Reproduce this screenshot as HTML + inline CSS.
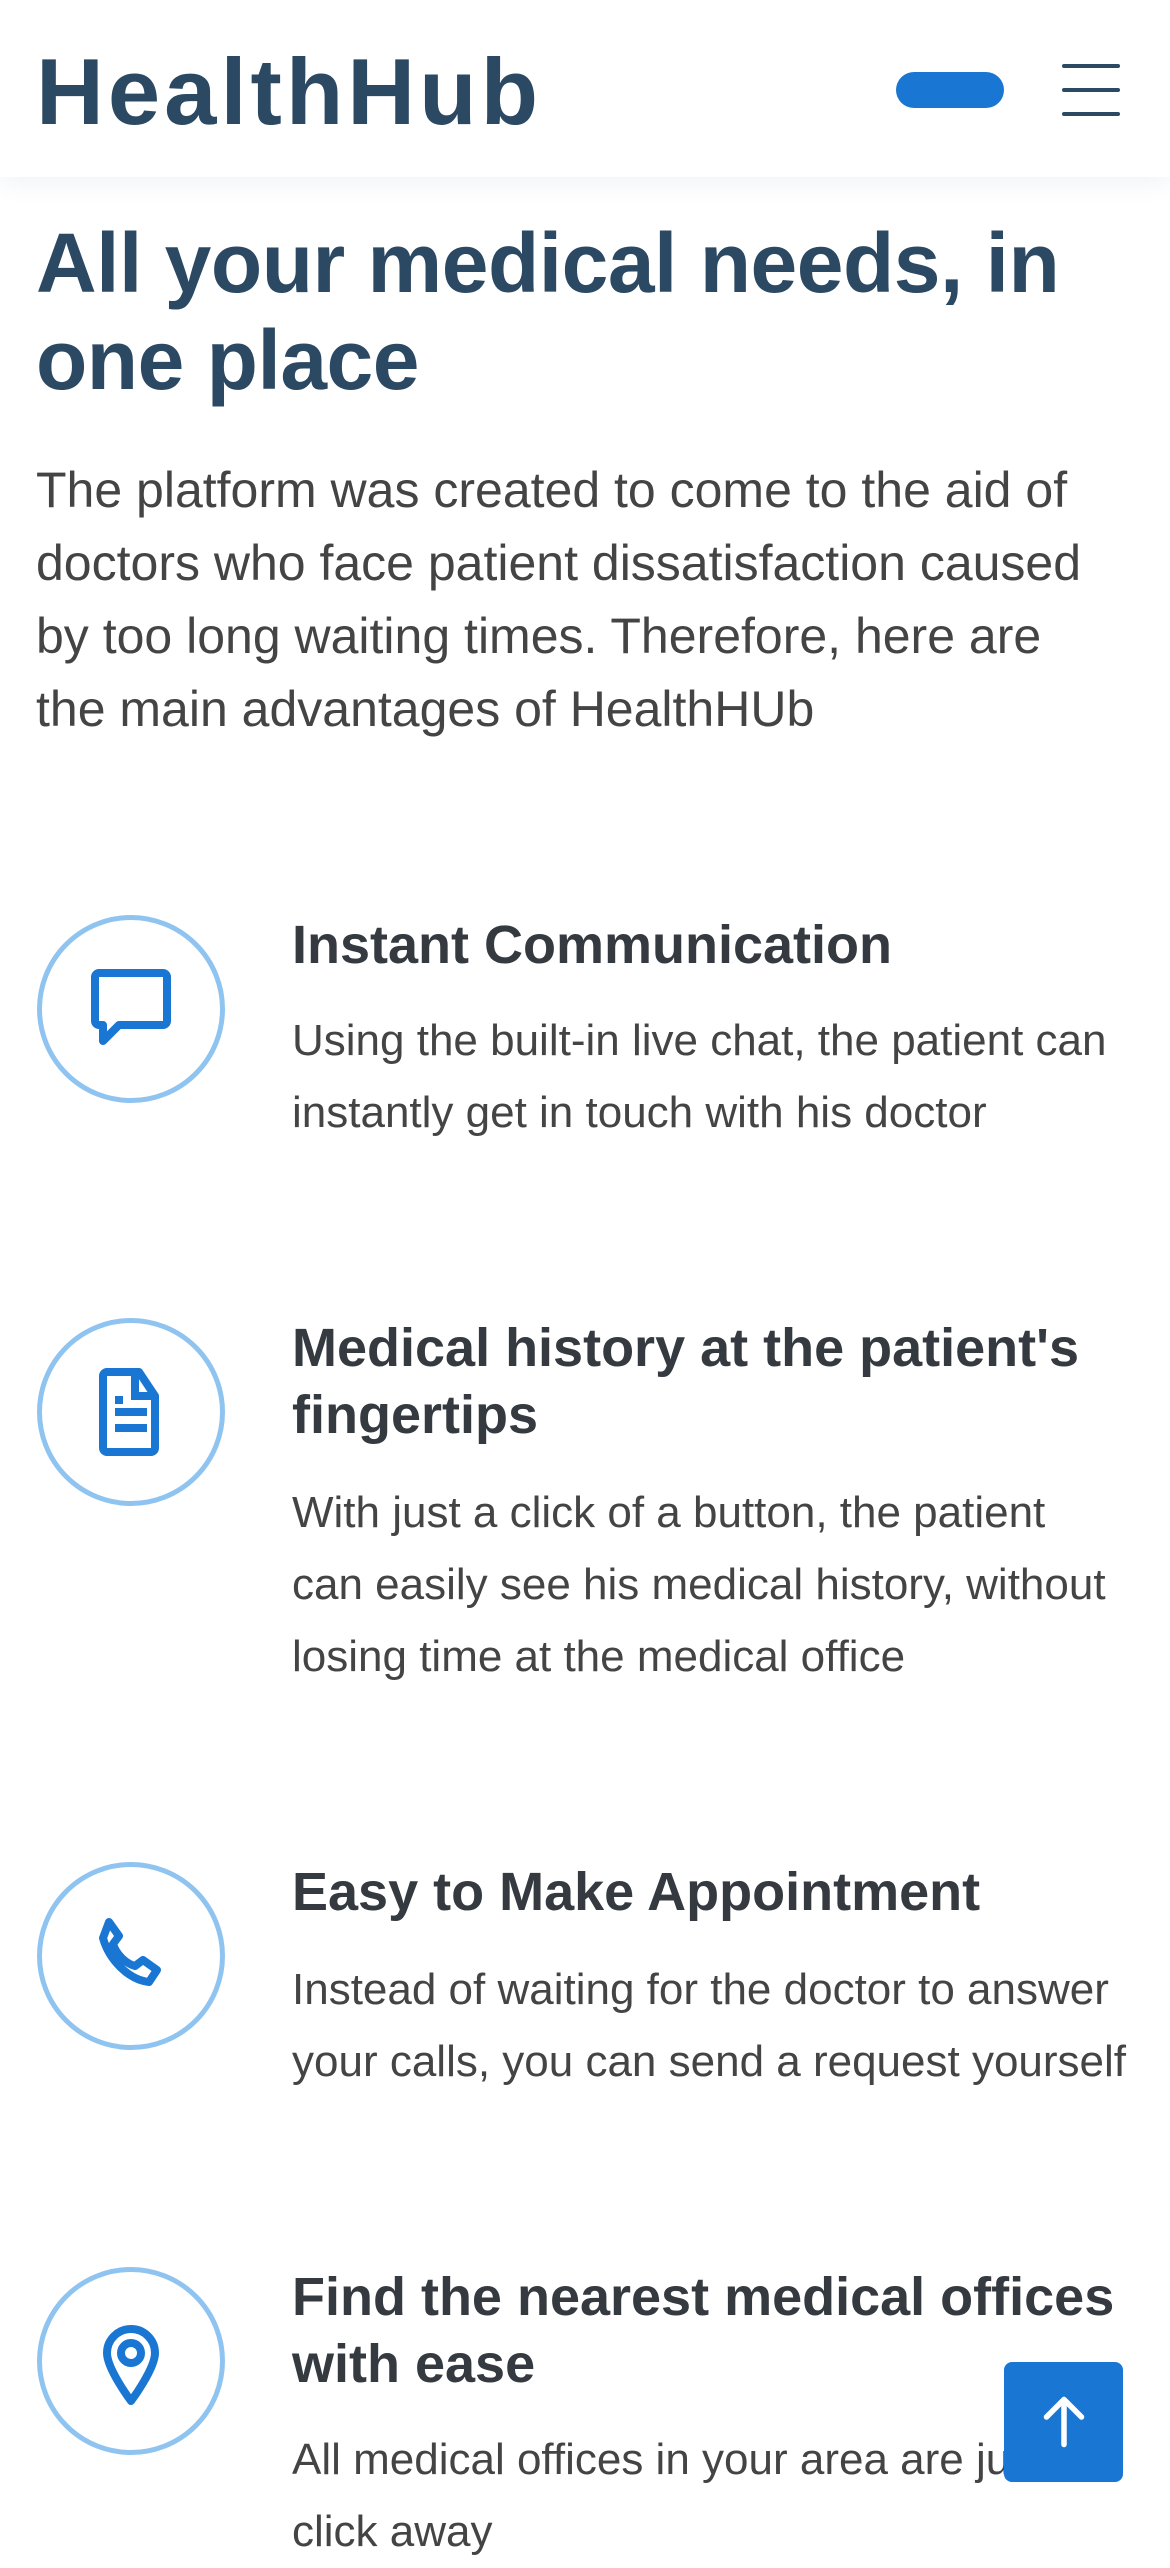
<!DOCTYPE html>
<html><head><meta charset="utf-8"><style>
*{margin:0;padding:0;box-sizing:border-box}
body{width:1170px;height:2532px;overflow:hidden;background:#fff;font-family:"Liberation Sans",sans-serif;position:relative}
.hdr{position:absolute;left:0;top:0;width:1170px;height:177px;background:#fff;box-shadow:0 4px 24px rgba(40,80,140,0.08);z-index:2}
.logo{position:absolute;left:36px;top:42px;font-size:94px;line-height:100px;font-weight:bold;color:#2c4964;letter-spacing:4px}
.pill{position:absolute;left:896px;top:72px;width:108px;height:36px;border-radius:18px;background:#1976d2}
.bar{position:absolute;left:1062px;width:58px;height:4px;background:#2c4964;border-radius:2px}
.t{position:absolute;white-space:nowrap}
h1{position:absolute;left:36px;top:215px;font-size:84px;line-height:97px;color:#2c4964;font-weight:bold;white-space:nowrap;letter-spacing:-0.5px}
.lead{left:36px;top:454px;font-size:50px;line-height:73px;color:#444}
.ttl{left:292px;font-size:54px;line-height:67px;font-weight:bold;color:#343a40}
.dsc{left:292px;font-size:44px;line-height:72px;color:#444}
.c{position:absolute;left:37px;width:188px;height:188px;border:5px solid #90c4f0;border-radius:50%;display:flex;align-items:center;justify-content:center}
.top{position:absolute;left:1004px;top:2362px;width:119px;height:120px;background:#1976d2;border-radius:8px;display:flex;align-items:center;justify-content:center}
</style></head><body>
<div class="hdr">
<div class="logo">HealthHub</div>
<div class="pill"></div>
<div class="bar" style="top:64px"></div>
<div class="bar" style="top:88px"></div>
<div class="bar" style="top:112px"></div>
</div>
<h1>All your medical needs, in<br>one place</h1>
<div class="t lead">The platform was created to come to the aid of<br>doctors who face patient dissatisfaction caused<br>by too long waiting times. Therefore, here are<br>the main advantages of HealthHUb</div>

<div class="c" style="top:915px"><svg width="96" height="96" viewBox="0 0 24 24" fill="none" stroke="#1976d2" stroke-width="2"><path d="M4 3h16a1 1 0 0 1 1 1v11a1 1 0 0 1-1 1H9l-4 4v-4H4a1 1 0 0 1-1-1V4a1 1 0 0 1 1-1z" stroke-linejoin="round"/></svg></div>
<div class="t ttl" style="top:912px">Instant Communication</div>
<div class="t dsc" style="top:1005px">Using the built-in live chat, the patient can<br>instantly get in touch with his doctor</div>

<div class="c" style="top:1318px"><svg width="96" height="96" viewBox="0 0 24 24" fill="none" stroke="#1976d2" stroke-width="2"><path d="M6 2h8l4 6v13a1 1 0 0 1-1 1H6a1 1 0 0 1-1-1V3a1 1 0 0 1 1-1z" stroke-linejoin="round"/><path d="M13 2v6h5M8 12h8M8 16h8M8 9h2"/></svg></div>
<div class="t ttl" style="top:1315px">Medical history at the patient's<br>fingertips</div>
<div class="t dsc" style="top:1477px">With just a click of a button, the patient<br>can easily see his medical history, without<br>losing time at the medical office</div>

<div class="c" style="top:1862px"><svg width="96" height="96" viewBox="0 0 24 24" fill="none" stroke="#1976d2" stroke-width="2" stroke-linejoin="round"><path d="M6.5 3.5l2.5 3.5-1.5 2c.8 2.5 3 4.8 5.5 5.5l2-1.5 3.5 2.5-2 3c-5-.5-10-5.5-11.5-11z"/></svg></div>
<div class="t ttl" style="top:1859px">Easy to Make Appointment</div>
<div class="t dsc" style="top:1954px">Instead of waiting for the doctor to answer<br>your calls, you can send a request yourself</div>

<div class="c" style="top:2267px"><svg width="96" height="96" viewBox="0 0 24 24" fill="none" stroke="#1976d2" stroke-width="2"><path d="M12 22s-6-8-6-12a6 6 0 0 1 12 0c0 4-6 12-6 12z" stroke-linejoin="round"/><circle cx="12" cy="10" r="2.5"/></svg></div>
<div class="t ttl" style="top:2264px">Find the nearest medical offices<br>with ease</div>
<div class="t dsc" style="top:2424px">All medical offices in your area are just a<br>click away</div>

<div class="top"><svg width="50" height="60" viewBox="0 0 20 24" fill="none" stroke="#fff" stroke-width="2.2" stroke-linecap="round" stroke-linejoin="round"><path d="M10 21V3M3 10l7-7 7 7"/></svg></div>
</body></html>
